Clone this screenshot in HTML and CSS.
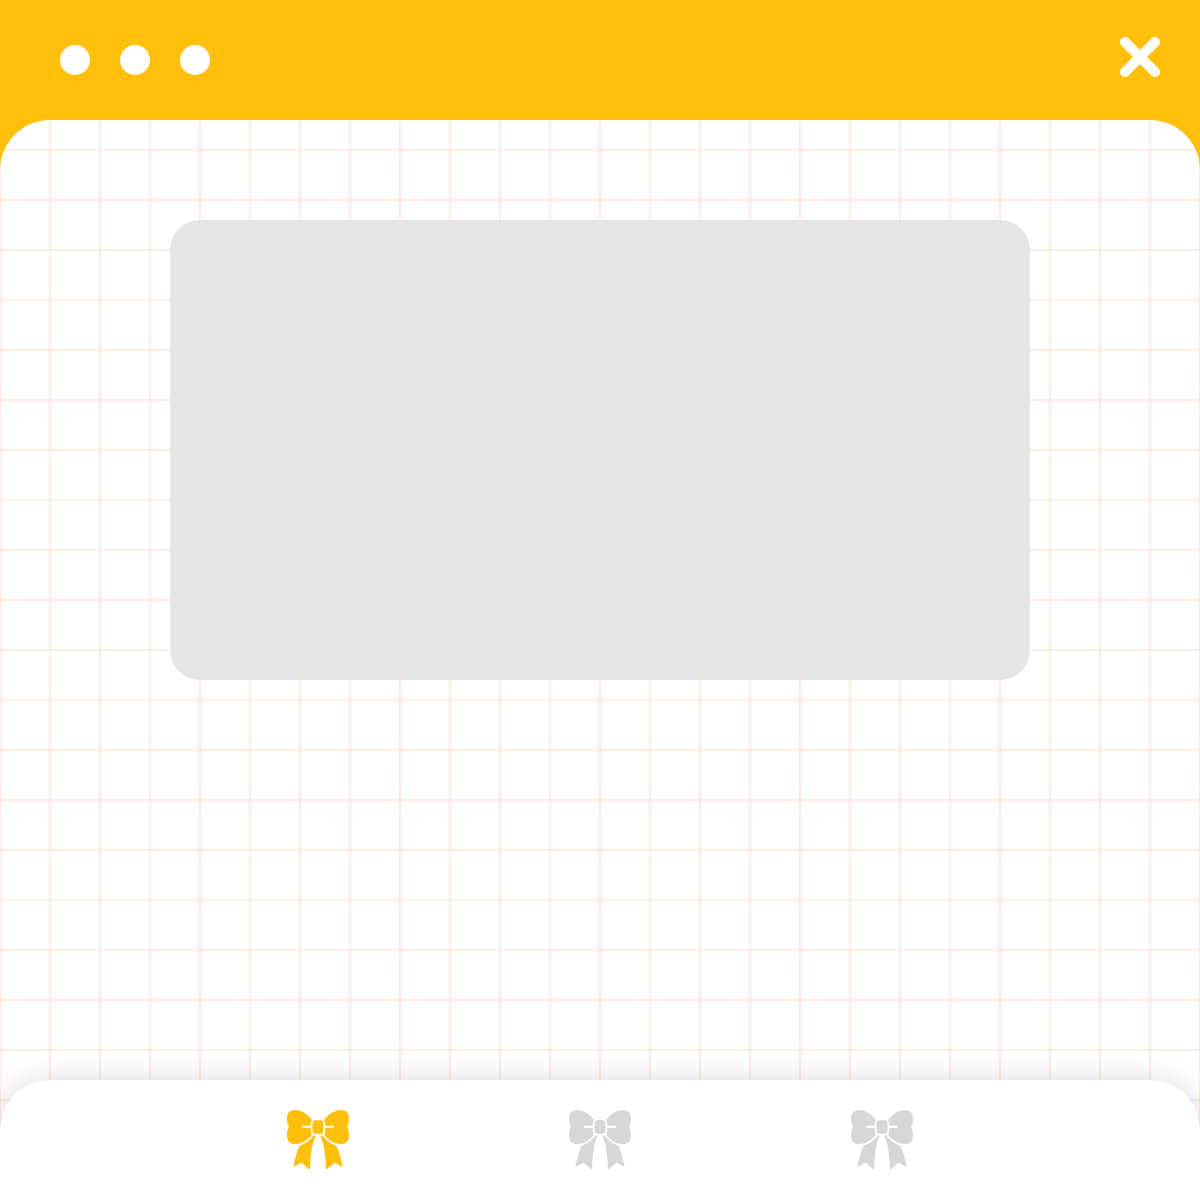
FILE: index.html
```html
<!DOCTYPE html>
<html lang="en">
<head>
  <meta charset="utf-8">
  <meta name="viewport" content="width=device-width, initial-scale=1">
  <title>Window</title>
  <link rel="stylesheet" href="styles.css">
</head>
<body>
  <svg class="sprite" aria-hidden="true">
    <symbol id="bow" viewBox="24 24 192 192">
      <g id="bow-half">
        <path d="M102 60C87 40 68 30 50 30C33 30 27 42 27 56C27 66 29 75 33 80C29 86 27 94 27 104C27 122 34 132 51 132C71 132 88 122 101 105Q98 94 98 84H75Q72 84 72 80.500Q72 77 75 77H98Q98 68 102 60Z"/>
        <path d="M107 106C95 122 82 132 65 137C56 156 50 178 46 201L70 188L96 209C97 170 101 132 113 107Q110 107 107 106Z"/>
      </g>
      <use href="#bow-half" transform="matrix(-1 0 0 1 240 0)"/>
      <path d="M112 61Q120 60 128 61Q136 61 136 69Q138 80 136 93Q136 101 128 101Q120 102 112 101Q104 101 104 93Q102 80 104 69Q104 61 112 61Z"/>
    </symbol>
  </svg>
  <div class="window">
    <header class="titlebar">
      <div class="dots">
        <span class="dot"></span>
        <span class="dot"></span>
        <span class="dot"></span>
      </div>
      <button class="close" type="button" aria-label="Close">
        <svg viewBox="0 0 40 40"><path d="M5 5L35 35M35 5L5 35"/></svg>
      </button>
    </header>
    <main class="content">
      <div class="card"></div>
    </main>
    <nav class="tabs" aria-label="Pages">
      <button class="tab tab-active" type="button" aria-label="Page 1"><svg><use href="#bow"/></svg></button>
      <button class="tab" type="button" aria-label="Page 2"><svg><use href="#bow"/></svg></button>
      <button class="tab" type="button" aria-label="Page 3"><svg><use href="#bow"/></svg></button>
    </nav>
  </div>
</body>
</html>
```

FILE: styles.css
```css
* {
  box-sizing: border-box;
}

body {
  margin: 0;
  font-family: "Liberation Sans", sans-serif;
}

button {
  padding: 0;
  border: 0;
  background: none;
  cursor: pointer;
}

svg {
  display: block;
  width: 100%;
  height: 100%;
}

.sprite {
  position: absolute;
  width: 0;
  height: 0;
}

.window {
  display: flex;
  flex-direction: column;
  min-height: 100vh;
  overflow: hidden;
  background: linear-gradient(#ffbf0a 200px, #fff 200px);
}

.titlebar {
  display: flex;
  justify-content: space-between;
  align-items: flex-start;
  height: 120px;
  padding: 37px 40px 0 60px;
}

.dots {
  display: flex;
  gap: 30px;
  padding-top: 8px;
}

.dot {
  width: 30px;
  height: 30px;
  border-radius: 50%;
  background: #fff;
}

.close {
  width: 40px;
  height: 40px;
}

.close path {
  fill: none;
  stroke: #fff;
  stroke-width: 10;
  stroke-linecap: round;
}

.content {
  flex: 1;
  padding: 100px 170px 150px;
  border-radius: 50px 50px 0 0;
  background:
    linear-gradient(90deg, #ff803424 2px, transparent 2px) -1px 0 / 50px 50px,
    linear-gradient(#ff803424 2px, transparent 2px) 0 29px / 50px 50px,
    #fff;
}

.card {
  height: 460px;
  border-radius: 30px;
  background: #e5e5e5;
}

.tabs {
  display: flex;
  justify-content: space-evenly;
  height: 120px;
  margin-top: -50px;
  padding: 28px 68px;
  border-radius: 50px 50px 0 0;
  background: #fff;
  box-shadow: 0 0 30px #00000026;
}

.tab {
  width: 64px;
  height: 64px;
  fill: #d7d7d7;
}

.tab-active {
  fill: #ffbf0a;
}
```
